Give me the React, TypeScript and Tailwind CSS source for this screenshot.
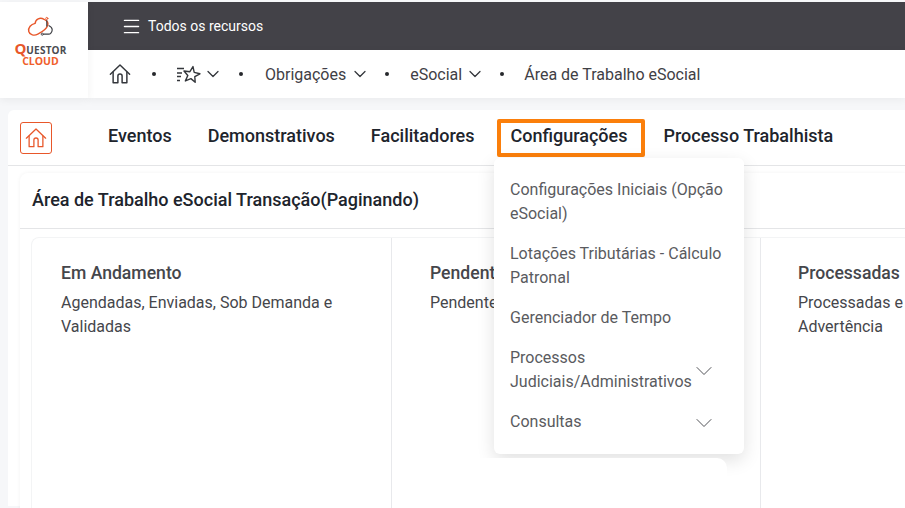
import React from "react";
import { ChevronDown, Menu } from "lucide-react";

function HomeIcon({ size, color, sw }: { size: number; color: string; sw: number }) {
  return (
    <svg width={size} height={size} viewBox="0 0 24 24" fill="none" stroke={color} strokeWidth={sw} strokeLinejoin="round" strokeLinecap="round">
      <path d="M1.5 12.2 12 2.2l10.5 10" />
      <path d="M4.5 10v11.5h5.2v-7.2a2.3 2.3 0 0 1 4.6 0v7.2h5.2V10" />
    </svg>
  );
}

function FavIcon() {
  return (
    <svg width="25" height="18" viewBox="0 0 25 18" fill="none" stroke="#33363b" strokeWidth="1.4" strokeLinejoin="round">
      <path d="M17 1.600 18.200 7.400 23.900 8.800 18.800 11.700 19.200 17.300 14.900 13.600 9.400 15.900 11.800 10.500 8 6 13.900 6.700z" />
      <path d="M1 3.500h7M1 8h5M1 11.500h4M1 15.500h3" />
    </svg>
  );
}

function Logo() {
  return (
    <div className="flex flex-col items-center">
      <svg width="27" height="22" viewBox="0 0 30 24" fill="none" strokeLinecap="round" strokeLinejoin="round">
        <path d="M19 3.500C14.500 1 9.500 3 9 8 4.500 9 1 12.500 2 17c1 4 6 5 10 3 4-2 10-6 11-10 .8-3-1-5-3-6" stroke="#e8572a" strokeWidth="1.600" />
        <circle cx="22" cy="2.500" r="1.200" stroke="#e8572a" strokeWidth="1" />
        <path d="M22 5v6M24.500 10.500c2 1 3.500 2 3.500 4.500s-2 5-4 5h-5" stroke="#3f4045" strokeWidth="1.300" />
        <circle cx="17" cy="20" r="1.200" stroke="#3f4045" strokeWidth="1" />
      </svg>
      <div className="mt-[4px] flex h-[12px] items-baseline font-['Open_Sans',sans-serif] font-bold leading-[12px] text-[#4a4b50]">
        <span className="text-[15px] text-[#e8572a]">Q</span>
        <span className="text-[10px] tracking-[0.2px]">UESTOR</span>
      </div>
      <div className="mt-[2px] font-['Open_Sans',sans-serif] text-[10.500px] font-bold leading-[11px] text-[#f0602c]">CLOUD</div>
    </div>
  );
}

const Chev = () => <ChevronDown size={20} strokeWidth={1.500} color="#33363b" className="-my-[4px] mx-[1px]" />;

const Dot = () => <span className="block h-[4px] w-[4px] shrink-0 rounded-full bg-[#26282c]" />;

function Column({ title, lines, className }: { title: string; lines: string[]; className: string }) {
  return (
    <div className={`overflow-hidden pt-[23px] ${className}`}>
      <div className="mb-[6px] whitespace-nowrap text-[17.600px] font-medium leading-[24px] text-[#45464b]">{title}</div>
      {lines.map((l) => (
        <div key={l} className="whitespace-nowrap text-[16px] leading-[24px] text-[#45464b]">{l}</div>
      ))}
    </div>
  );
}

function MenuItem({ lines, chevron }: { lines: string[]; chevron?: boolean }) {
  return (
    <div className="flex items-center justify-between pb-[16px] pl-[16px] pr-[36px]">
      <div className="whitespace-nowrap text-[16px] leading-[24px] text-[#5a5b60]">
        {lines.map((l) => (
          <div key={l}>{l}</div>
        ))}
      </div>
      {chevron && <ChevronDown size={28} strokeWidth={0.800} color="#45464b" className="-mb-[5px] -ml-[4px] -mr-[10px] -mt-[3px] shrink-0" />}
    </div>
  );
}

export default function App() {
  return (
    <div className="relative h-[508px] w-[905px] overflow-hidden bg-[#f6f7f9] pt-[2px] font-['Roboto',sans-serif]">
      <div className="flex h-[96px]">
        <div className="relative z-10 flex w-[88px] shrink-0 items-center justify-center bg-white pb-[17px] pr-[7px] shadow-[0_2px_8px_rgba(0,0,0,0.06)]">
          <Logo />
        </div>
        <div className="flex min-w-0 flex-1 flex-col">
          <div className="flex h-[48px] items-center gap-[6px] bg-[#434248] pl-[33px] text-[14px] text-white">
            <Menu size={21} strokeWidth={1.700} />
            <span>Todos os recursos</span>
          </div>
          <div className="flex h-[48px] items-center bg-white pl-[21px] text-[16px] text-[#3f4045] shadow-[0_2px_8px_rgba(0,0,0,0.05)]">
            <HomeIcon size={22} color="#33363b" sw={1.600} />
            <span className="ml-[21px]"><Dot /></span>
            <span className="ml-[20px] flex items-center gap-[1px]">
              <FavIcon />
              <Chev />
            </span>
            <span className="ml-[15px]"><Dot /></span>
            <span className="ml-[22px] flex items-center gap-[3px]"><span className="pt-[2px]">Obrigações</span> <Chev /></span>
            <span className="ml-[14px]"><Dot /></span>
            <span className="ml-[21px] flex items-center gap-[2px]"><span className="pt-[2px]">eSocial</span> <Chev /></span>
            <span className="ml-[14px]"><Dot /></span>
            <span className="ml-[20px] whitespace-nowrap pt-[2px]">Área de Trabalho eSocial</span>
          </div>
        </div>
      </div>

      <div className="ml-[8px] mt-[12px] flex h-[396px] flex-col rounded-tl-[6px] bg-white">
        <div className="flex h-[56px] shrink-0 items-center border-b border-[#e4e5e7] pl-[12px]">
          <div className="flex h-[32px] w-[32px] items-center justify-center rounded-[3px] border border-[#e8572a]">
            <HomeIcon size={22} color="#e8572a" sw={1.400} />
          </div>
          <div className="ml-[56px] flex items-center whitespace-nowrap text-[18px] font-medium text-[#20242c]">
            <span className="pb-[5px]">Eventos</span>
            <span className="ml-[36px] pb-[5px]">Demonstrativos</span>
            <span className="ml-[36px] pb-[5px]">Facilitadores</span>
            <span className="ml-[22px] flex h-[38px] items-center rounded-[2px] border-[4px] border-[#fb7f0b] pb-[5px] pl-[10px] pr-[14px]">Configurações</span>
            <span className="ml-[18px] pb-[5px]">Processo Trabalhista</span>
          </div>
        </div>
        <div className="ml-[12px] mt-[7px] flex-1 rounded-tl-[8px] bg-white shadow-[0_0_4px_rgba(0,0,0,0.05)]">
          <div className="flex h-[56px] items-center border-b border-[#e4e5e7] pb-[2px] pl-[12px] text-[18px] font-medium text-[#20242c]">
            Área de Trabalho eSocial Transação(Paginando)
          </div>
          <div className="ml-[11px] mt-[8px] flex h-[280px] rounded-tl-[8px] border-l border-t border-[#f3f4f5]">
            <Column title="Em Andamento" lines={["Agendadas, Enviadas, Sob Demanda e", "Validadas"]} className="w-[359px] shrink-0 pl-[29px]" />
            <Column title="Pendentes" lines={["Pendentes"]} className="w-[369px] shrink-0 border-l border-[#e8e9ec] pl-[38px]" />
            <Column title="Processadas" lines={["Processadas e", "Advertência"]} className="flex-1 border-l border-[#e8e9ec] pl-[37px]" />
          </div>
        </div>
      </div>

      <div className="absolute left-[494px] top-[158px] z-10 h-[296px] w-[250px] rounded-[6px] bg-white pt-[20px] shadow-[0_6px_18px_rgba(0,0,0,0.12)]">
        <MenuItem lines={["Configurações Iniciais (Opção", "eSocial)"]} />
        <MenuItem lines={["Lotações Tributárias - Cálculo", "Patronal"]} />
        <MenuItem lines={["Gerenciador de Tempo"]} />
        <MenuItem lines={["Processos", "Judiciais/Administrativos"]} chevron />
        <MenuItem lines={["Consultas"]} chevron />
      </div>
      <div className="absolute left-[415px] top-[458px] z-20 h-[60px] w-[312px] rounded-t-[10px] bg-white" />
    </div>
  );
}
